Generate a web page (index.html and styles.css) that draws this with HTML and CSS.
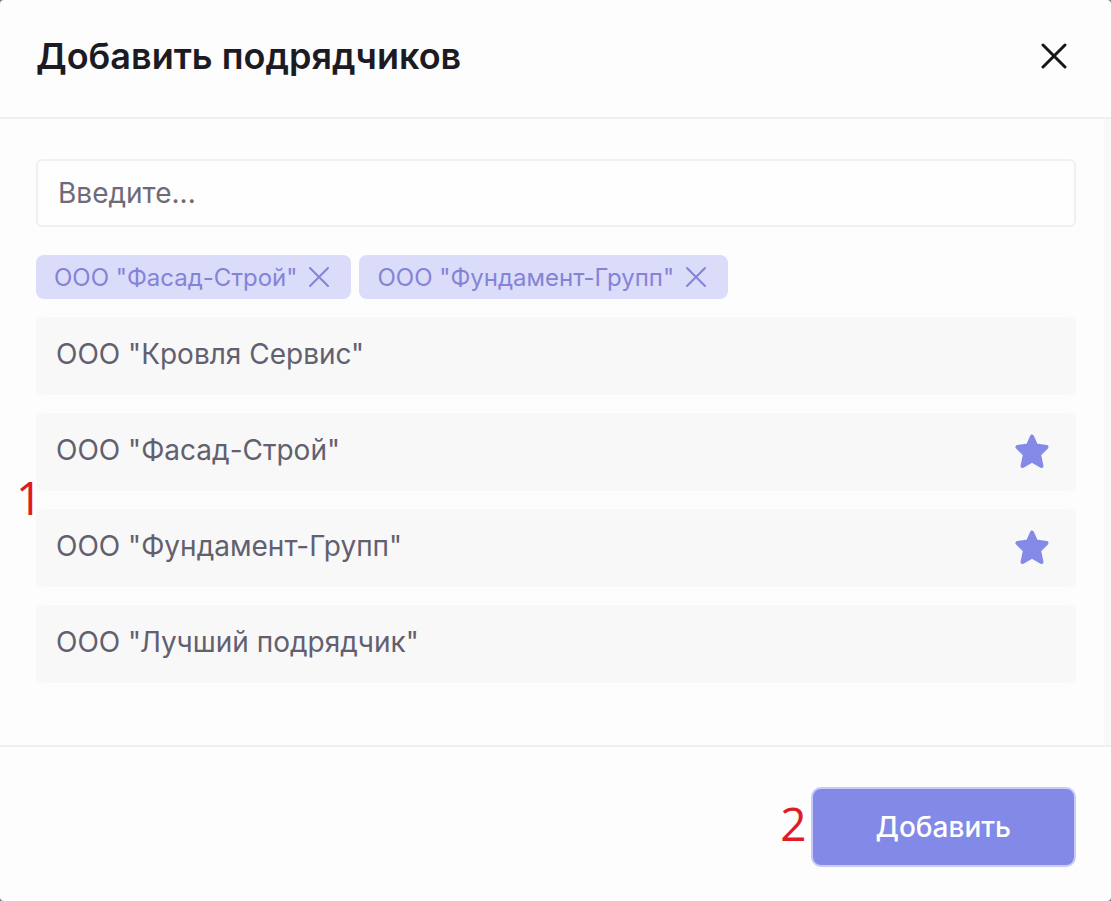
FILE: index.html
```html
<!DOCTYPE html>
<html lang="ru">
<head>
    <meta charset="UTF-8">
    <meta name="viewport" content="width=device-width, initial-scale=1.0">
    <title>Добавить подрядчиков</title>
    <link rel="stylesheet" href="styles.css">
</head>
<body>

    <div class="modal" role="dialog" aria-labelledby="modal-title">
        <header class="modal-header">
            <h1 id="modal-title">Добавить подрядчиков</h1>
            <button class="close-button" type="button" aria-label="Закрыть">
                <svg width="28" height="28" viewBox="0 0 28 28"><path d="M3 2l22 22M25 2L3 24"/></svg>
            </button>
        </header>

        <main class="modal-body">
            <input class="search" type="text" placeholder="Введите..." aria-label="Поиск подрядчика">

            <div class="tags">
                <span class="tag">
                    ООО "Фасад-Строй"
                    <button class="tag-remove" type="button" aria-label="Убрать Фасад-Строй">
                        <svg width="24" height="24" viewBox="0 0 24 24"><path d="M3 3l18 18M21 3L3 21"/></svg>
                    </button>
                </span>
                <span class="tag">
                    ООО "Фундамент-Групп"
                    <button class="tag-remove" type="button" aria-label="Убрать Фундамент-Групп">
                        <svg width="24" height="24" viewBox="0 0 24 24"><path d="M3 3l18 18M21 3L3 21"/></svg>
                    </button>
                </span>
            </div>

            <div class="list-wrap">
                <span class="marker marker-list">1</span>
                <ul class="list">
                    <li><button class="item" type="button">ООО "Кровля Сервис"</button></li>
                    <li>
                        <button class="item" type="button">
                            ООО "Фасад-Строй"
                            <svg class="star" width="36" height="36" viewBox="0 0 36 36"><path d="M18 4.500l4 9 10.500 1.500-7.500 7.500 2.500 11.500-9.500-5.500-9.500 5.500L11 22.500 3.500 15 14 13.500z"/></svg>
                        </button>
                    </li>
                    <li>
                        <button class="item" type="button">
                            ООО "Фундамент-Групп"
                            <svg class="star" width="36" height="36" viewBox="0 0 36 36"><path d="M18 4.500l4 9 10.500 1.500-7.500 7.500 2.500 11.500-9.500-5.500-9.500 5.500L11 22.500 3.500 15 14 13.500z"/></svg>
                        </button>
                    </li>
                    <li><button class="item" type="button">ООО "Лучший подрядчик"</button></li>
                </ul>
            </div>
        </main>

        <footer class="modal-footer">
            <span class="marker">2</span>
            <button class="btn" type="button">Добавить</button>
        </footer>
    </div>

</body>
</html>
```
FILE: styles.css
```css
* {
    box-sizing: border-box;
}

body {
    margin: 0;
    font-family: 'Inter', sans-serif;
    font-size: 28px;
    color: #62606f;
    background-color: #77777b;
}

button, input {
    font: inherit;
    color: inherit;
}

button {
    padding: 0;
    border: none;
    background: none;
    cursor: pointer;
}

svg {
    display: block;
    flex: none;
    fill: none;
    stroke: currentColor;
    stroke-linecap: round;
    stroke-linejoin: round;
}

/* Modal */
.modal {
    display: flex;
    flex-direction: column;
    min-height: 100vh;
    border-radius: 4px;
    overflow: hidden;
    background-color: #fdfdfd;
}

.modal-header {
    display: flex;
    align-items: center;
    justify-content: space-between;
    padding: 34px 43px 38px 36px;
    border-bottom: 2px solid #f0f0f1;
}

h1 {
    margin: 0;
    font-size: 36px;
    font-weight: 600;
    line-height: 45px;
    color: #1c1b24;
}

.close-button {
    color: #15151a;
}

.close-button svg {
    stroke-width: 3;
}

/* Right border is the scrollbar track */
.modal-body {
    flex: 1;
    padding: 40px 28px 40px 36px;
    border-right: 7px solid #f8f8f8;
}

.search {
    display: block;
    width: 100%;
    height: 68px;
    padding: 0 20px;
    border: 2px solid #f0f0f1;
    border-radius: 6px;
    background-color: #fefefe;
}

.search::placeholder {
    color: #6d6b78;
    opacity: 1;
}

/* Selected contractors */
.tags {
    display: flex;
    flex-wrap: wrap;
    gap: 8px;
    margin: 28px 0 18px;
}

.tag {
    display: flex;
    align-items: center;
    gap: 10px;
    height: 44px;
    padding: 0 20px 0 18px;
    border-radius: 8px;
    font-size: 24px;
    color: #8583d6;
    background-color: #dadcfa;
}

.tag-remove svg {
    stroke-width: 2;
}

/* Contractor list */
.list-wrap {
    position: relative;
}

.list {
    display: flex;
    flex-direction: column;
    gap: 18px;
    margin: 0;
    padding: 0;
    list-style: none;
}

.item {
    display: flex;
    align-items: center;
    justify-content: space-between;
    width: 100%;
    height: 78px;
    padding: 0 26px 4px 20px;
    border-radius: 6px;
    text-align: left;
    background-color: #f8f8f8;
}

.star {
    overflow: visible;
    color: #8589e8;
    fill: #8589e8;
    stroke-width: 4;
}

/* Step numbers */
.marker {
    padding-bottom: 8px;
    font-family: 'Open Sans', sans-serif;
    font-size: 46px;
    line-height: 64px;
    color: #e01b24;
}

.marker-list {
    position: absolute;
    top: 148px;
    left: -20px;
}

/* Footer */
.modal-footer {
    display: flex;
    align-items: center;
    justify-content: flex-end;
    gap: 4px;
    padding: 40px 35px 34px;
    border-top: 2px solid #f0f0f1;
}

.btn {
    height: 80px;
    padding: 0 63px;
    border: 2px solid #c9caf5;
    border-radius: 10px;
    font-weight: 500;
    color: #ffffff;
    background-color: #8389e6;
}
```
